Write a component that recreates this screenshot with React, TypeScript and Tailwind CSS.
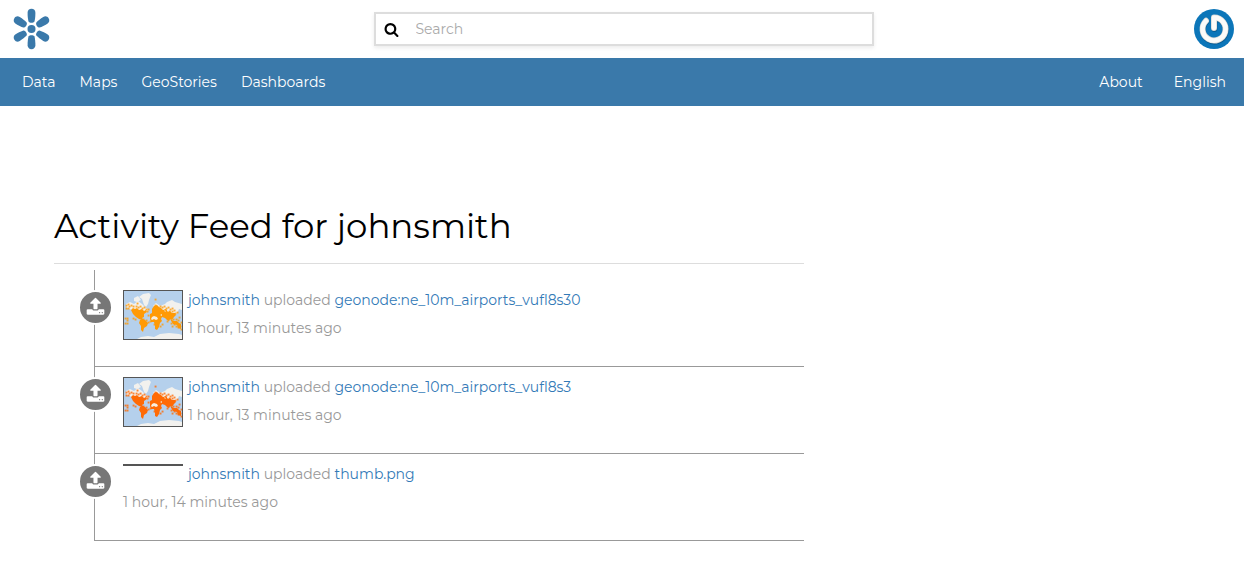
// Scattered airports around the dense regions, in map units.
const AIRPORTS: [number, number][] = [
  [2, 14], [4, 13], [5, 15], [7, 14], [9, 15], [2, 17], [4, 17], [12, 15], [14, 16], [16, 15], [18, 17], [20, 16], [22, 18],
  [24, 18], [13, 12], [31, 8], [31, 14], [36, 15], [38, 16], [40, 15], [42, 17], [44, 16], [46, 18], [48, 17], [50, 19], [53, 21],
  [41, 19], [48, 20], [51, 22], [55, 26], [1, 27], [3, 27], [3, 29], [1, 32], [3, 32], [24, 24], [23, 20], [19, 28],
  [22, 29], [49, 28], [52, 28], [47, 32], [50, 33], [52, 35], [54, 36], [56, 35], [57, 31], [38, 33], [36, 35], [30, 33],
  [44, 28], [43, 30], [57, 38], [26, 30], [45, 20], [9, 27], [11, 28], [54, 29], [48, 35], [24, 31],
];

function WorldMap({ land }: { land: string }) {
  return (
    <svg viewBox="0 0 58 48" preserveAspectRatio="none" className="block h-full w-full" role="img" aria-label="Airports map">
      <rect width="58" height="48" fill="#b5d0ec" />
      <g fill="#f2f1ee">
        <path d="M15 6 19 3 25 2 27 4 25 9 24 13 22 16 20 14 18 8Z" />
        <path d="M2 13 6 11 10 13 14 10 18 13 21 16 25 19 22 22 17 21 8 19 3 17Z" />
        <path d="M10 7 14 5 17 9 13 11 10 10Z" />
        <path d="M29 15 32 12 36 15 41 13 43 11 48 9 51 11 58 13V19L55 18 53 23 49 24 45 25 35 20Z" />
        <path d="M17 46 24 45 30 46 36 43 45 42 55 43 58 44V48H13Z" />
      </g>
      <g fill={land}>
        <path d="M7 19 9 17 11 18 13 17 15 19 18 18 20 20 22 19 23 21 20 23 20 26 18 27 20 29 18 29 15 28 12 26 9 23Z" />
        <path d="M16 29 18 28 21 29 24 32 23 35 20 37 19 41 17 39 17 35 15 32Z" />
        <path d="M26 23 28 22 28 18 30 15 33 14 35 16 37 17 39 19 42 18 44 21 46 20 48 22 51 22 52 24 50 26 48 29 46 28 45 30 43 29 41 27 38 26 37 28 38 30 36 32 35 36 33 39 31 38 31 35 30 31 27 31 26 28Z" />
        <path d="M46 28 48 29 50 30 53 30 55 32 57 33V38L54 37 53 34 49 33Z" />
        {AIRPORTS.map(([x, y]) => (
          <rect key={`${x}-${y}`} x={x - 0.4} y={y - 0.4} width="1.9" height="1.9" opacity="0.8" />
        ))}
      </g>
      <path d="M27 28 28 26 30 25 33 26 34 28 32 29 30 28 28 29Z" fill="#f7eee0" />
      <path d="M40 20 41 19 42 21Z M36 24 38 23 38 25Z" fill="#f4e2c4" />
    </svg>
  );
}

function Logo() {
  return (
    <svg viewBox="-18.5 -20 37 40" className="block h-10 w-[37px] overflow-visible" fill="#3a79aa" aria-hidden="true">
      <circle r="4" />
      {[0, 58, 122, 180, 238, 302].map((angle) => (
        <path
          key={angle}
          transform={`rotate(${angle})`}
          d="M-3 -7.6C-3.6 -10 -3.9 -13 -3.9 -16.3C-3.9 -18.7 -2.3 -20.2 0 -20.2S3.9 -18.7 3.9 -16.3C3.9 -13 3.6 -10 3 -7.6C2 -5.8 -2 -5.8 -3 -7.6Z"
        />
      ))}
    </svg>
  );
}

function Avatar() {
  return (
    <svg viewBox="-20 -20 40 40" className="block size-10" aria-hidden="true">
      <circle r="20" fill="#0c76b9" />
      <g fill="none" strokeLinecap="round" strokeLinejoin="round">
        <path d="M0 -1V-11.5A11.5 11.5 0 1 1 -8 -8.2" stroke="#085c93" strokeWidth="6" transform="translate(.4 .9)" />
        <path d="M0 -1V-11.5A11.5 11.5 0 1 1 -8 -8.2" stroke="#d8d8d5" strokeWidth="6" />
        <path d="M0 -1V-11.5A11.5 11.5 0 1 1 -8 -8.2" stroke="#fbfbf9" strokeWidth="4.6" />
      </g>
    </svg>
  );
}

function SearchIcon() {
  return (
    <svg viewBox="0 0 1792 1792" className="size-[15px] shrink-0" aria-hidden="true">
      <path d="M1216 832q0-185-131.5-316.5t-316.5-131.5-316.5 131.5-131.5 316.5 131.5 316.5 316.5 131.5 316.5-131.5 131.5-316.5zm512 832q0 52-38 90t-90 38q-54 0-90-38l-343-342q-179 124-399 124-143 0-273.5-55.5t-225-150-150-225-55.5-273.5 55.5-273.5 150-225 225-150 273.5-55.5 273.5 55.5 225 150 150 225 55.5 273.5q0 220-124 399l343 343q37 37 37 90z" />
    </svg>
  );
}

function UploadIcon() {
  return (
    <svg viewBox="0 0 1792 1792" className="size-[19px]" fill="#fff" aria-hidden="true">
      <path d="M1344 1472q0-26-19-45t-45-19-45 19-19 45 19 45 45 19 45-19 19-45zm256 0q0-26-19-45t-45-19-45 19-19 45 19 45 45 19 45-19 19-45zm128-224v320q0 40-28 68t-68 28h-1472q-40 0-68-28t-28-68v-320q0-40 28-68t68-28h427q21 56 70.5 92t110.5 36h256q61 0 110.5-36t70.5-92h427q40 0 68 28t28 68zm-325-648q-17 40-59 40h-256v448q0 26-19 45t-45 19h-256q-26 0-45-19t-19-45v-448h-256q-42 0-59-40-17-39 14-69l448-448q18-19 45-19t45 19l448 448q31 30 14 69z" />
    </svg>
  );
}

type Activity = { target: string; time: string; land?: string };

const activities: Activity[] = [
  { target: "geonode:ne_10m_airports_vufl8s30", time: "1 hour, 13 minutes ago", land: "#ff9a05" },
  { target: "geonode:ne_10m_airports_vufl8s3", time: "1 hour, 13 minutes ago", land: "#ff6a05" },
  { target: "thumb.png", time: "1 hour, 14 minutes ago" },
];

function ActivityItem({ target, time, land }: Activity) {
  return (
    <li className="relative border-b border-[#999] pt-1.5 pb-6 pl-7">
      <span className="absolute top-2.5 -left-[17px] flex size-[35px] items-center justify-center rounded-full border-2 border-white bg-[#777] pb-0.5">
        <UploadIcon />
      </span>
      <div className={land ? "float-left mt-1 mr-[5px] h-[50px] w-[60px] border border-[#555]" : "float-left mt-1 mr-[5px] w-[60px] border border-[#555]"}>
        {land && <WorldMap land={land} />}
      </div>
      <p>
        <a href="#johnsmith" className="text-[#337ab7]">johnsmith</a> uploaded{" "}
        <a href="#resource" className="text-[#337ab7]">{target}</a>
      </p>
      <p>{time}</p>
    </li>
  );
}

export default function App() {
  return (
    <div className="min-h-screen bg-white font-['Montserrat','Inter',sans-serif] text-sm leading-7 text-[#999]">
      <header className="grid h-[58px] grid-cols-[1fr_500px_1fr] items-center pr-2.5 pl-[13px]">
        <a href="#home" aria-label="Home" className="justify-self-start">
          <Logo />
        </a>
        <label className="flex h-[34px] items-center gap-[17px] border-2 border-[#ddd] pl-2 text-black shadow-[0_2px_4px_rgba(0,0,0,0.08)]">
          <SearchIcon />
          <input type="text" placeholder="Search" aria-label="Search" className="min-w-0 flex-1 bg-transparent outline-none placeholder:text-[#aaa]" />
        </label>
        <button type="button" aria-label="Account" className="justify-self-end">
          <Avatar />
        </button>
      </header>
      <nav className="flex h-12 items-center justify-between bg-[#3a79aa] pr-[18px] pl-[22px] text-white">
        <div className="flex gap-6">
          <a href="#data">Data</a>
          <a href="#maps">Maps</a>
          <a href="#geostories">GeoStories</a>
          <a href="#dashboards">Dashboards</a>
        </div>
        <div className="flex gap-[31px]">
          <a href="#about">About</a>
          <a href="#language">English</a>
        </div>
      </nav>
      <main className="ml-[54px] max-w-[750px] pt-[100px] pb-12">
        <h1 className="border-b border-[#ddd] pb-[17px] text-[34px] leading-10 text-black">Activity Feed for johnsmith</h1>
        <ul className="mt-1.5 ml-10 border-l border-[#999] pt-2.5">
          {activities.map((activity) => (
            <ActivityItem key={activity.target} {...activity} />
          ))}
        </ul>
      </main>
    </div>
  );
}
